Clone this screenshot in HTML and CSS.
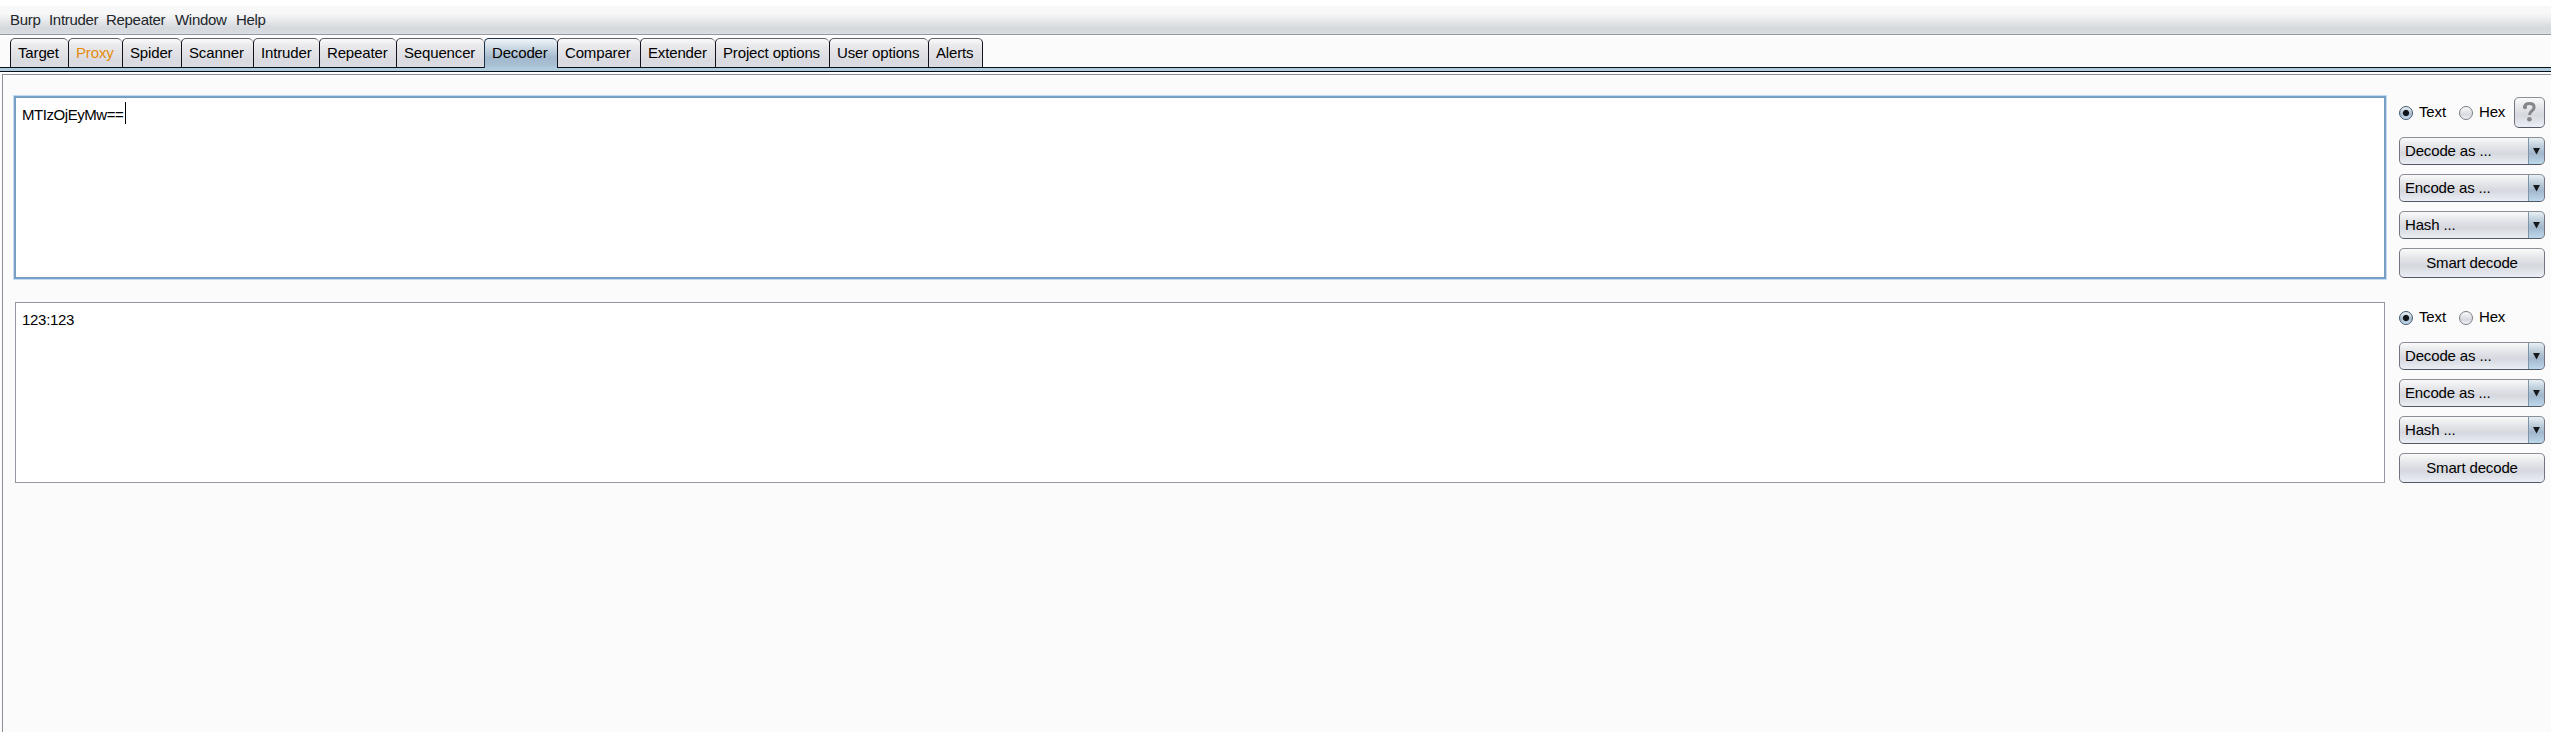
FILE: index.html
```html
<!DOCTYPE html>
<html lang="en">
<head>
<meta charset="utf-8">
<title>Burp Decoder</title>
<link rel="stylesheet" href="styles.css">
</head>
<body>
<nav class="menubar"><span class="menu burp">Burp</span><span class="menu intr">Intruder</span><span class="menu rep">Repeater</span><span class="menu win">Window</span><span class="menu">Help</span></nav>
<div class="tabs">
  <div class="tab w58">Target</div><div class="tab w54 alert">Proxy</div><div class="tab w59">Spider</div><div class="tab w72">Scanner</div><div class="tab w66">Intruder</div><div class="tab w77">Repeater</div><div class="tab w88">Sequencer</div><div class="tab w73 active">Decoder</div><div class="tab w83">Comparer</div><div class="tab w75">Extender</div><div class="tab w114">Project options</div><div class="tab w99">User options</div><div class="tab w54 last">Alerts</div>
</div>
<div class="strip"></div>
<main class="pane">
  <section class="row">
    <div class="editor focused"><span class="code">MTIzOjEyMw==</span><i class="caret"></i></div>
    <aside class="controls">
      <div class="modes">
        <span class="radio on"></span><span class="mode text">Text</span><span class="radio"></span><span class="mode">Hex</span>
        <button class="help"><svg width="15" height="21" viewBox="0 0 15 21"><path d="M2.3 5.8C2.8 2.8 4.7 1.6 7.3 1.6C10.3 1.6 12.1 3.2 12.1 5.5C12.1 8.9 7.5 9 7.5 13" fill="none" stroke="#85868a" stroke-width="3"/><circle cx="3" cy="5.3" r="2" fill="#85868a"/><circle cx="7.4" cy="17.3" r="2.3" fill="#85868a"/></svg></button>
      </div>
      <div class="combo"><span>Decode as ...</span><b><svg width="7" height="7"><path d="M0 0H7L3.5 6.5Z" fill="#15181c"/></svg></b></div>
      <div class="combo"><span>Encode as ...</span><b><svg width="7" height="7"><path d="M0 0H7L3.5 6.5Z" fill="#15181c"/></svg></b></div>
      <div class="combo"><span>Hash ...</span><b><svg width="7" height="7"><path d="M0 0H7L3.5 6.5Z" fill="#15181c"/></svg></b></div>
      <button class="smart">Smart decode</button>
    </aside>
  </section>
  <section class="row">
    <div class="editor"><span class="result">123:123</span></div>
    <aside class="controls">
      <div class="modes">
        <span class="radio on"></span><span class="mode text">Text</span><span class="radio"></span><span class="mode">Hex</span>
      </div>
      <div class="combo"><span>Decode as ...</span><b><svg width="7" height="7"><path d="M0 0H7L3.5 6.5Z" fill="#15181c"/></svg></b></div>
      <div class="combo"><span>Encode as ...</span><b><svg width="7" height="7"><path d="M0 0H7L3.5 6.5Z" fill="#15181c"/></svg></b></div>
      <div class="combo"><span>Hash ...</span><b><svg width="7" height="7"><path d="M0 0H7L3.5 6.5Z" fill="#15181c"/></svg></b></div>
      <button class="smart">Smart decode</button>
    </aside>
  </section>
</main>
</body>
</html>
```
FILE: styles.css
```css
* { box-sizing: border-box; }
body {
  margin: 0;
  height: 732px;
  display: flex;
  flex-direction: column;
  overflow: hidden;
  background: #fbfbfb;
  color: #000;
  font: 15px/18px "Liberation Sans", Arial, sans-serif;
  letter-spacing: -0.15px;
}
.menubar {
  height: 35px;
  flex: none;
  display: flex;
  padding: 11px 0 0 10px;
  color: #23262b;
  letter-spacing: -0.3px;
  background: linear-gradient(#fff 6px, #f8f8f8 6px, #f8f8f8 13px, #e9ebed 20px, #d5d8dc 28px, #d7dade 33px, #e2e5e9 34px);
  border-bottom: 1px solid #9297a1;
}
.burp { width: 39px; }
.intr { width: 57px; }
.rep { width: 69px; }
.win { width: 61px; }
.tabs {
  height: 33px;
  flex: none;
  display: flex;
  padding: 3px 0 0 10px;
  border-bottom: 1px solid #05101c;
  box-shadow: inset 0 2px #fff;
}
.tab {
  flex: none;
  height: 29px;
  padding: 5px 0 0 7px;
  white-space: nowrap;
  border-left: 1px solid #11111f;
  border-top: 1px solid #606167;
  border-radius: 5px 5px 0 0;
  background: linear-gradient(#fafafa, #e9e9ec 25%, #d9dae0 80%, #dcdde3);
}
.alert { color: #e58b0b; }
.active {
  height: 30px;
  border-color: #1c3048;
  background: linear-gradient(#f2f6f9, #cbd9e3 30%, #a2b8cd 65%, #a9c0d4 90%, #b0cadc);
}
.last { border-right: 1px solid #11111f; }
.w54 { width: 54px; }
.w54.last { width: 55px; }
.w58 { width: 58px; }
.w59 { width: 59px; }
.w66 { width: 66px; }
.w72 { width: 72px; }
.w73 { width: 73px; }
.w75 { width: 75px; }
.w77 { width: 77px; }
.w83 { width: 83px; }
.w88 { width: 88px; }
.w99 { width: 99px; }
.w114 { width: 114px; }
.strip {
  height: 6px;
  flex: none;
  background: linear-gradient(#b0cbdc 3px, #05101c 3px, #05101c 4px, #fff 4px);
}
.pane {
  flex: 1;
  margin-left: 2px;
  border-left: 1px solid #8b8f99;
  border-top: 1px solid #8b8f99;
  padding: 22px 6px 0 12px;
}
.row {
  display: flex;
  justify-content: space-between;
  height: 181px;
  margin-bottom: 24px;
}
.editor {
  width: 2370px;
  border: 1px solid #9297a1;
  background: #fff;
  padding: 8px 0 0 6px;
  display: flex;
}
.editor span { height: 18px; }
.focused {
  border-color: #7d9bb9;
  box-shadow: 0 0 0 1px #73a4d1, 0 0 0 2px #c4daef;
}
.code {
  width: 103px;
  letter-spacing: -0.45px;
}
.result { letter-spacing: -0.3px; }
.caret { width: 1px; height: 22px; background: #000; margin-top: -4px; }
.controls { width: 146px; }
.modes {
  display: flex;
  align-items: center;
  height: 31px;
  margin-bottom: 9px;
}
.radio {
  width: 14px;
  height: 14px;
  flex: none;
  border: 1px solid #777b84;
  border-radius: 50%;
  background: linear-gradient(#fafafa, #d7d9df 65%, #f0f2f8);
}
.on {
  border-color: #435a71;
  background: radial-gradient(circle, #101317 2.6px, transparent 3.6px), linear-gradient(#eef3f7, #a6bacc 60%, #c7e0f1);
}
.mode { margin: 0 0 2px 6px; }
.mode.text { width: 40px; }
.help, .smart, .combo {
  border: 1px solid #70747e;
  border-color: #8b8f98 #71757f #535865;
  border-radius: 5px;
  background: linear-gradient(#fafafa, #e6e7ea 30%, #d6d8df 60%, #eceef5);
  font: inherit;
  letter-spacing: inherit;
  color: #000;
  padding: 0;
}
.help {
  width: 31px;
  height: 31px;
  margin-left: auto;
  display: grid;
  place-items: center;
}
.combo {
  height: 28px;
  margin-bottom: 9px;
  display: flex;
  overflow: hidden;
}
.combo span { flex: 1; padding: 4px 0 0 5px; }
.combo b {
  width: 17px;
  margin: -1px -1px -1px 0;
  border: 1px solid #486079;
  border-left-color: #7e94a9;
  border-radius: 0 5px 5px 0;
  display: grid;
  place-items: center;
  background: linear-gradient(#e9f0f5, #b9cad8 35%, #a2b7cc 60%, #bdd8eb);
}
.smart { width: 146px; height: 30px; display: block; }
```
